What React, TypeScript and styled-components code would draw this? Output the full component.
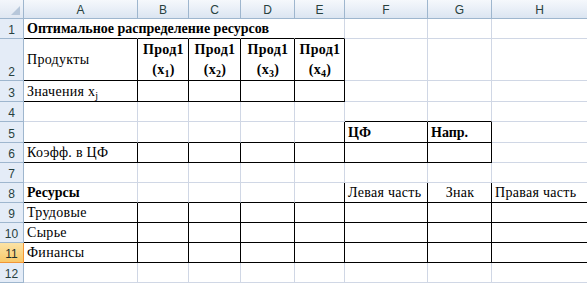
import React from "react";
import styled, { createGlobalStyle, css } from "styled-components";

const Global = createGlobalStyle`
  html, body { margin: 0; padding: 0; background: #fff; overflow: hidden; }
  #root { width: 587px; height: 283px; overflow: hidden; }
`;

const COLS = [24, 114, 51, 52, 54, 50, 83, 64, 96];
const ROWS = [19, 20, 42, 21, 20, 21, 20, 20, 20, 20, 20, 20, 20];
const LETTERS = ["A", "B", "C", "D", "E", "F", "G", "H"];
const GRID = "#d0d7e5";
const HEAD_BORDER = "#9eb6ce";

const Sheet = styled.div`
  display: grid;
  grid-template-columns: ${COLS.map((c) => c + "px").join(" ")};
  grid-template-rows: ${ROWS.map((r) => r + "px").join(" ")};
  width: max-content;
  font-family: "Liberation Serif", "Times New Roman", serif;
  font-size: 14px;
  color: #000;
`;

const Corner = styled.div`
  position: relative;
  box-sizing: border-box;
  background: linear-gradient(#f3f6fb, #dfe7f2);
  border-right: 1px solid ${HEAD_BORDER};
  border-bottom: 1px solid ${HEAD_BORDER};
  &::after {
    content: "";
    position: absolute;
    right: 3px;
    bottom: 3px;
    width: 0;
    height: 0;
    border-left: 9px solid transparent;
    border-bottom: 9px solid #b7c7da;
  }
`;

const ColHead = styled.div`
  box-sizing: border-box;
  display: flex;
  align-items: center;
  justify-content: center;
  background: linear-gradient(#f5f8fc 0%, #e9eff7 50%, #dbe5f1 100%);
  border-right: 1px solid ${HEAD_BORDER};
  border-bottom: 1px solid ${HEAD_BORDER};
  font-family: "Liberation Sans", Arial, sans-serif;
  font-size: 12px;
  color: #27413e;
  padding-top: 1px;
`;

const RowHead = styled.div<{ $active?: boolean }>`
  box-sizing: border-box;
  display: flex;
  align-items: flex-end;
  justify-content: center;
  padding-bottom: 1px;
  background: #e4ecf7;
  border-right: 1px solid ${HEAD_BORDER};
  border-bottom: 1px solid ${HEAD_BORDER};
  font-family: "Liberation Sans", Arial, sans-serif;
  font-size: 12px;
  color: #27413e;
  ${(p) =>
    p.$active &&
    css`
      background: linear-gradient(#fbe3a6, #f9c96a);
      border-right-color: #f29536;
      border-bottom-color: #f29536;
      color: #1f2f2c;
    `}
`;

const Cell = styled.div<{
  $right: "grid" | "black" | "none" | "dash";
  $bottom: "grid" | "black";
  $bold?: boolean;
  $align?: "left" | "center";
  $valign?: "end" | "center";
}>`
  box-sizing: border-box;
  display: flex;
  align-items: ${(p) => (p.$valign === "center" ? "center" : "flex-end")};
  justify-content: ${(p) => (p.$align === "center" ? "center" : "flex-start")};
  padding: 0 2px 1px 3px;
  white-space: nowrap;
  overflow: visible;
  font-weight: ${(p) => (p.$bold ? 700 : 400)};
  letter-spacing: ${(p) => (p.$bold ? "0" : "0.3px")};
  line-height: 17px;
  border-bottom: 1px solid ${(p) => (p.$bottom === "black" ? "#000" : GRID)};
  border-right: ${(p) =>
    p.$right === "black"
      ? "1px solid #000"
      : p.$right === "dash"
      ? "1px dashed #000"
      : p.$right === "none"
      ? "1px solid transparent"
      : `1px solid ${GRID}`};
`;

const Stack = styled.div`
  display: flex;
  flex-direction: column;
  align-items: center;
  line-height: 20px;
  font-weight: 700;
  padding-top: 1px;
`;

const Sub = styled.sub`
  font-size: 10px;
  line-height: 0;
  vertical-align: -3px;
`;

type Region = { r1: number; r2: number; c1: number; c2: number; top?: boolean };

// rows 1-based, cols 0-based (A=0)
const REGIONS: Region[] = [
  { r1: 2, r2: 3, c1: 0, c2: 4, top: true },
  { r1: 6, r2: 6, c1: 0, c2: 4, top: true },
  { r1: 5, r2: 6, c1: 5, c2: 6, top: true },
  { r1: 8, r2: 11, c1: 5, c2: 7, top: false },
  { r1: 9, r2: 11, c1: 0, c2: 4, top: true },
];

const inRegion = (r: number, c: number) =>
  REGIONS.some((g) => r >= g.r1 && r <= g.r2 && c >= g.c1 && c <= g.c2);
const regionTop = (r: number, c: number) =>
  REGIONS.some((g) => g.top && r === g.r1 && c >= g.c1 && c <= g.c2);

type Content = {
  node: React.ReactNode;
  bold?: boolean;
  align?: "left" | "center";
  valign?: "end" | "center";
};

const prod = (n: number): Content => ({
  node: (
    <Stack>
      <span>Прод1</span>
      <span>
        (x<Sub>{n}</Sub>)
      </span>
    </Stack>
  ),
  align: "center",
  valign: "center",
});

const CONTENT: Record<string, Content> = {
  "1-0": { node: "Оптимальное распределение ресурсов", bold: true },
  "2-0": { node: "Продукты", valign: "center" },
  "2-1": prod(1),
  "2-2": prod(2),
  "2-3": prod(3),
  "2-4": prod(4),
  "3-0": {
    node: (
      <span>
        Значения x<Sub>j</Sub>
      </span>
    ),
  },
  "5-5": { node: "ЦФ", bold: true },
  "5-6": { node: "Напр.", bold: true },
  "6-0": { node: "Коэфф. в ЦФ" },
  "8-0": { node: "Ресурсы", bold: true },
  "8-5": { node: "Левая часть" },
  "8-6": { node: "Знак", align: "center" },
  "8-7": { node: "Правая часть" },
  "9-0": { node: "Трудовые" },
  "10-0": { node: "Сырье" },
  "11-0": { node: "Финансы" },
};

const NO_RIGHT = new Set(["1-0", "1-1", "1-2", "1-3"]);

export default function App() {
  const cells: React.ReactNode[] = [];
  cells.push(<Corner key="corner" />);
  LETTERS.forEach((l) => cells.push(<ColHead key={"h" + l}>{l}</ColHead>));

  for (let r = 1; r <= 12; r++) {
    cells.push(
      <RowHead key={"r" + r} $active={r === 11}>
        {r}
      </RowHead>
    );
    for (let c = 0; c < 8; c++) {
      const key = `${r}-${c}`;
      const content = CONTENT[key];
      let right: "grid" | "black" | "none" | "dash" = "grid";
      if (inRegion(r, c) || inRegion(r, c + 1)) right = "black";
      if (NO_RIGHT.has(key)) right = "none";
      if (c === 7) right = "dash";
      const bottom: "grid" | "black" =
        inRegion(r, c) || regionTop(r + 1, c) ? "black" : "grid";
      cells.push(
        <Cell
          key={key}
          $right={right}
          $bottom={bottom}
          $bold={content?.bold}
          $align={content?.align}
          $valign={content?.valign}
        >
          {content?.node}
        </Cell>
      );
    }
  }

  return (
    <>
      <Global />
      <Sheet>{cells}</Sheet>
    </>
  );
}
